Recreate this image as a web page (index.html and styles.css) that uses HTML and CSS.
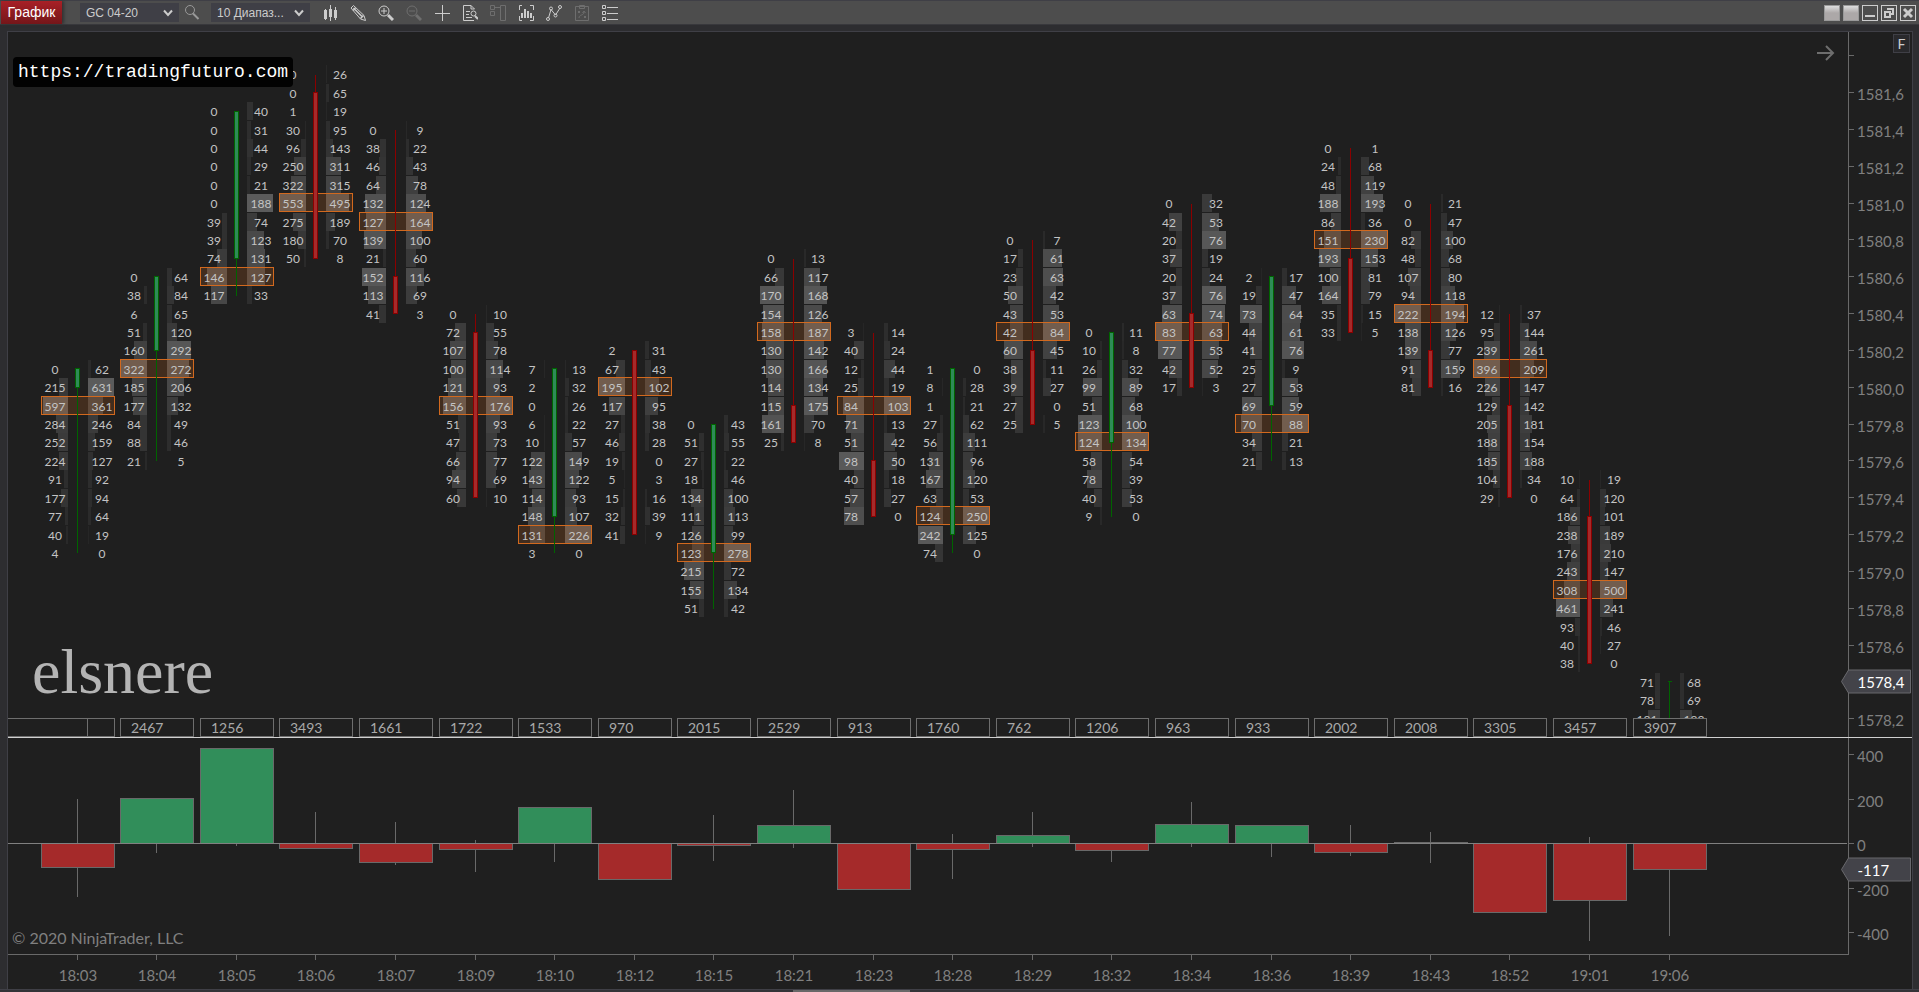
FILE: index.html
```html
<!DOCTYPE html>
<html lang="ru">
<head>
    <meta charset="UTF-8">
    <meta name="viewport" content="width=device-width, initial-scale=1.0">
    <title>График GC 04-20</title>
    <link rel="stylesheet" href="styles.css">
</head>
<body>
    <header class="toolbar">
        <h1 class="tab">График</h1>
        <div class="picker">
            <select aria-label="Instrument">
                <option>GC 04-20</option>
            </select>
            <svg class="chevron" width="10" height="8" viewBox="0 0 10 8"><path d="M1 1.5 5 6l4-4.5"/></svg>
        </div>
        <button class="tool search" aria-label="Search">
            <svg viewBox="0 0 16 16"><circle cx="6" cy="5" r="4.5"/><path d="M9 8.5 14.5 14" stroke-width="2"/></svg>
        </button>
        <div class="picker">
            <select aria-label="Interval">
                <option>10 Диапаз...</option>
            </select>
            <svg class="chevron" width="10" height="8" viewBox="0 0 10 8"><path d="M1 1.5 5 6l4-4.5"/></svg>
        </div>
        <div class="tools">
            <button class="tool" aria-label="Chart style">
                <svg viewBox="0 0 16 16"><path d="M3.5 4v11M8.5 0v16M13.5 2v13"/><path d="M3.5 5v9M8.5 4v8M13.5 5v8" stroke-width="3"/></svg>
            </button>
            <button class="tool" aria-label="Drawing tools">
                <svg viewBox="0 0 16 16"><path d="M1 3 3.5.5 14 10.500 15.500 15.500 10.500 14Z"/><path d="M3.5 3 12.500 12M3 5.500 5.500 3M10.500 13.500 13.500 10.500" stroke-width="1.500"/></svg>
            </button>
            <button class="tool" aria-label="Zoom in">
                <svg viewBox="0 0 16 16"><circle cx="6" cy="6" r="5"/><path d="M3 6h6M6 3v6"/><path d="M10 10l5 5" stroke-width="3"/></svg>
            </button>
            <button class="tool" aria-label="Zoom out" disabled>
                <svg viewBox="0 0 16 16"><circle cx="6" cy="6" r="5"/><path d="M3 6h6"/><path d="M10 10l5 5" stroke-width="3"/></svg>
            </button>
            <button class="tool" aria-label="Crosshair">
                <svg viewBox="0 0 16 16"><path d="M8.5 0v16M1 8.5h15"/></svg>
            </button>
            <button class="tool" aria-label="Data box">
                <svg viewBox="0 0 16 16"><path d="M12 15.5H1.500V.5H9L12.500 4M9 .5V4h3.500M4 6.500h4M4 9.500h3M4 12.500h6"/><circle cx="11.500" cy="8.500" r="2.500"/><path d="m13 11 3 3" stroke-width="2"/></svg>
            </button>
            <button class="tool" aria-label="Chart trader" disabled>
                <svg viewBox="0 0 16 16"><path d="M.5.500h4v4h-4ZM.5 6.500h4v4h-4ZM5 2.500h5M10.500.500h5v15h-5Z"/></svg>
            </button>
            <button class="tool" aria-label="Indicators">
                <svg viewBox="0 0 16 16"><path d="M4 .5H1.500V5M12 .5h3.500V5M4 15.500H1.500V11M12 15.500h3.500V11"/><path d="M4 8v5M7 4v9M10 6v7M13 8v5" stroke-width="2"/></svg>
            </button>
            <button class="tool" aria-label="Strategies">
                <svg viewBox="0 0 16 16"><path d="M2.500 13 5 4.500 9.500 10 14 3"/><circle cx="2" cy="14" r="1.500"/><circle cx="5" cy="3.500" r="1.500"/><circle cx="9.500" cy="10.500" r="1.500"/><circle cx="14" cy="2" r="1.500"/></svg>
            </button>
            <button class="tool" aria-label="Strategy performance" disabled>
                <svg viewBox="0 0 16 16"><path d="M1.500 1.500h13v14h-13ZM5.500.5h5v3h-5Z"/><path d="m4 6 2 2m0-2L4 8m6 3 2 2m0-2-2 2M5 13c0-4 5-2 5-6M8.500 8 10 6l1.500 2"/></svg>
            </button>
            <button class="tool" aria-label="Properties">
                <svg viewBox="0 0 16 16"><path d="M.5.500h3v3h-3ZM.5 6.500h3v3h-3ZM.5 12.500h3v3h-3ZM5 2.500h11M5 8.500h11M5 14.500h11"/></svg>
            </button>
        </div>
        <div class="window-buttons">
            <button class="link-button" aria-label="Instrument link"></button>
            <button class="link-button" aria-label="Interval link"></button>
            <button aria-label="Minimize"><svg viewBox="0 0 14 14"><path d="M2 10h10" stroke-width="2"/></svg></button>
            <button aria-label="Restore"><svg viewBox="0 0 14 14"><path d="M5 3h6v5H9M3 6h5v5H3Z" stroke-width="2"/></svg></button>
            <button aria-label="Close"><svg viewBox="0 0 14 14"><path d="m3 3 8 8M11 3l-8 8" stroke-width="3"/></svg></button>
        </div>
    </header>

    <main class="chart">
        <section class="pane price">
            <svg id="price"></svg>
            <a class="site" href="https://tradingfuturo.com">https://tradingfuturo.com</a>
            <p class="author">elsnere</p>
            <button class="scroll-end" aria-label="Go to last bar">
                <svg viewBox="0 0 20 16"><path d="M1 8h16M10 1l7 7-7 7"/></svg>
            </button>
            <button class="fixed">F</button>
        </section>
        <section class="pane delta">
            <svg id="delta"></svg>
            <p class="copyright">© 2020 NinjaTrader, LLC</p>
        </section>
        <section class="pane time">
            <svg id="time"></svg>
        </section>
    </main>
    <div class="scrollbar"><div class="thumb"></div></div>

    <script src="chart.js"></script>
</body>
</html>
```
FILE: styles.css
```css
* {
    box-sizing: border-box;
}
body {
    margin: 0;
    height: 100vh;
    display: flex;
    flex-direction: column;
    overflow: hidden;
    background-color: #2d2d30;
    color: #808080;
    font-family: "Liberation Sans", Arial, sans-serif;
    font-size: 12px;
}
button {
    padding: 0;
    border: none;
    background: none;
    color: inherit;
    font: inherit;
}
svg {
    display: block;
    fill: none;
    stroke: currentColor;
}

/* toolbar */
.toolbar {
    display: flex;
    align-items: center;
    height: 25px;
    padding: 0 3px 0 1px;
    border-top: 1px solid #3f3f46;
    border-bottom: 1px solid #38383c;
    background-color: #4d4d4d;
    color: #cccccc;
}
.tab {
    width: 61px;
    height: 23px;
    margin: 0 18px 0 0;
    background: linear-gradient(#a82026, #74161a);
    box-shadow: 2px 0 3px #333333;
    color: #ffffff;
    font-size: 14px;
    font-weight: normal;
    line-height: 23px;
    text-align: center;
}
.picker {
    position: relative;
    width: 99px;
    height: 19px;
}
.picker select {
    width: 100%;
    height: 100%;
    padding: 0 16px 0 6px;
    appearance: none;
    border: none;
    border-radius: 0;
    background-color: #3f3f46;
    color: #cccccc;
    font: inherit;
}
.chevron {
    position: absolute;
    top: 6px;
    right: 6px;
    stroke-width: 2;
    pointer-events: none;
}
.tool {
    width: 16px;
    height: 16px;
}
.tool:disabled {
    color: #6e6e6e;
}
.search {
    margin: 0 11px 0 5px;
    color: #999999;
}
.tools {
    display: flex;
    gap: 12px;
    margin-left: 12px;
}
.window-buttons {
    display: flex;
    gap: 3px;
    margin-left: auto;
}
.window-buttons button {
    width: 16px;
    height: 16px;
    border: 1px solid #cccccc;
}
.window-buttons .link-button {
    border-color: #999999;
    background: linear-gradient(#dddddd, #aca8a8 50%);
}

/* chart */
.chart {
    flex: 1;
    display: grid;
    grid-template-rows: minmax(0, 1fr) 217px 34px;
    margin: 6px 6px 0 7px;
    border: 1px solid #3f3f46;
    border-bottom: none;
    background-color: #1f1f1f;
    font-family: "Century Gothic", Lato, sans-serif;
    font-size: 15px;
}
.pane {
    position: relative;
    min-width: 0;
}
.pane > svg {
    width: 100%;
    height: 100%;
}
.price {
    border-bottom: 1px solid #d0d0d0;
}
.pane text {
    fill: #808080;
    stroke: none;
}
.pane rect,
.pane line {
    shape-rendering: crispEdges;
}
.axis {
    stroke: #696969;
}
.zero {
    stroke: #808080;
}
.pane .cell {
    fill: #c4c4c4;
    font-size: 12px;
    text-anchor: middle;
}
.volume {
    fill: #ffffff;
    stroke: none;
}
.poc {
    fill: rgba(210, 105, 30, 0.2);
    stroke: #d2691e;
}
.up {
    fill: #2e8b57;
    stroke: #006400;
}
.down {
    fill: #a52a2a;
    stroke: #8b0000;
}
.total {
    fill: #1f1f1f;
    stroke: #6e6e6e;
}
.pane .total-text {
    fill: #a9a9a9;
    font-size: 14px;
}
.delta .up,
.delta .down {
    stroke: #696969;
}
.delta .up {
    fill: #318e5a;
}
.time text {
    text-anchor: middle;
}
.marker {
    fill: #434349;
    stroke: #69696d;
}
.pane .marker-text {
    fill: #ffffff;
}

/* things that lie over the chart */
.site {
    position: absolute;
    top: 25px;
    left: 5px;
    padding: 0 5px;
    border-radius: 4px;
    background-color: #020202;
    color: #ffffff;
    font: 18px/30px "Liberation Mono", "Courier New", monospace;
    text-decoration: none;
}
.author {
    position: absolute;
    bottom: 33px;
    left: 24px;
    margin: 0;
    color: #b4b4b4;
    font: 64px/64px "Liberation Serif", "Times New Roman", serif;
}
.scroll-end {
    position: absolute;
    top: 13px;
    right: 76px;
    width: 20px;
    height: 16px;
    color: #6e6e6e;
}
.scroll-end svg {
    stroke-width: 2;
}
.fixed {
    position: absolute;
    top: 2px;
    right: 2px;
    width: 17px;
    height: 19px;
    border: 1px solid #3f3f46;
    background-color: #29292c;
    color: #cccccc;
    font-size: 14px;
    line-height: 17px;
}
.copyright {
    position: absolute;
    bottom: 8px;
    left: 4px;
    margin: 0;
    font-size: 16px;
    line-height: 18px;
}
.scrollbar {
    height: 3px;
    border-top: 1px solid #3f3f46;
    background-color: #333337;
}
.thumb {
    width: 117px;
    height: 2px;
    margin-left: 793px;
    background-color: #686868;
}
```
FILE: chart.js
```js
// row = ticks below 1581,6; body = [first, last] row of the candle body; cells = bid, ask
const bars = [
    { time: '18:03', row: 15, body: [15, 16], up: true, poc: 2, wick: [203, -237], cells: [[0, 62], [215, 631], [597, 361], [284, 246], [252, 159], [224, 127], [91, 92], [177, 94], [77, 64], [40, 19], [4, 0]] },
    { time: '18:04', row: 10, body: [10, 14], up: true, poc: 5, wick: [0, -39], cells: [[0, 64], [38, 84], [6, 65], [51, 120], [160, 292], [322, 272], [185, 206], [177, 132], [84, 49], [88, 46], [21, 5]] },
    { time: '18:05', row: 1, body: [1, 9], up: true, poc: 9, wick: [0, -8], cells: [[0, 40], [0, 31], [0, 44], [0, 29], [0, 21], [0, 188], [39, 74], [39, 123], [74, 131], [146, 127], [117, 33]] },
    { time: '18:06', row: -1, body: [0, 9], up: false, poc: 7, wick: [145, 0], cells: [[0, 26], [0, 65], [1, 19], [30, 95], [96, 143], [250, 311], [322, 315], [553, 495], [275, 189], [180, 70], [50, 8]] },
    { time: '18:07', row: 2, body: [10, 12], up: false, poc: 5, wick: [100, -93], cells: [[0, 9], [38, 22], [46, 43], [64, 78], [132, 124], [127, 164], [139, 100], [21, 60], [152, 116], [113, 69], [41, 3]] },
    { time: '18:09', row: 12, body: [13, 22], up: false, poc: 5, wick: [19, -124], cells: [[0, 10], [72, 55], [107, 78], [100, 114], [121, 93], [156, 176], [51, 93], [47, 73], [66, 77], [94, 69], [60, 10]] },
    { time: '18:10', row: 15, body: [15, 23], up: true, poc: 9, wick: [0, -80], cells: [[7, 13], [2, 32], [0, 26], [6, 22], [10, 57], [122, 149], [143, 122], [114, 93], [148, 107], [131, 226], [3, 0]] },
    { time: '18:12', row: 14, body: [14, 24], up: false, poc: 2, wick: [0, 0], cells: [[2, 31], [67, 43], [195, 102], [117, 95], [27, 38], [46, 28], [19, 0], [5, 3], [15, 16], [32, 39], [41, 9]] },
    { time: '18:15', row: 18, body: [18, 25], up: true, poc: 7, wick: [131, -75], cells: [[0, 43], [51, 55], [27, 22], [18, 46], [134, 100], [111, 113], [126, 99], [123, 278], [215, 72], [155, 134], [51, 42]] },
    { time: '18:21', row: 9, body: [17, 19], up: false, poc: 4, wick: [244, -17], cells: [[0, 13], [66, 117], [170, 168], [154, 126], [158, 187], [130, 142], [130, 166], [114, 134], [115, 175], [161, 70], [25, 8]] },
    { time: '18:23', row: 13, body: [20, 23], up: false, poc: 4, wick: [0, 0], cells: [[3, 14], [40, 24], [12, 44], [25, 19], [84, 103], [71, 13], [51, 42], [98, 50], [40, 18], [57, 27], [78, 0]] },
    { time: '18:28', row: 15, body: [15, 24], up: true, poc: 8, wick: [46, -156], cells: [[1, 0], [8, 28], [1, 21], [27, 62], [56, 111], [131, 96], [167, 120], [63, 53], [124, 250], [242, 125], [74, 0]] },
    { time: '18:29', row: 8, body: [14, 18], up: false, poc: 5, wick: [145, -12], cells: [[0, 7], [17, 61], [23, 63], [50, 42], [43, 53], [42, 84], [60, 45], [38, 11], [39, 27], [27, 0], [25, 5]] },
    { time: '18:32', row: 13, body: [13, 19], up: true, poc: 6, wick: [0, -80], cells: [[0, 11], [10, 8], [26, 32], [99, 89], [51, 68], [123, 100], [124, 134], [58, 54], [78, 39], [40, 53], [9, 0]] },
    { time: '18:34', row: 6, body: [12, 16], up: false, poc: 7, wick: [190, -12], cells: [[0, 32], [42, 53], [20, 76], [37, 19], [20, 24], [37, 76], [63, 74], [83, 63], [77, 53], [42, 52], [17, 3]] },
    { time: '18:36', row: 10, body: [10, 17], up: true, poc: 8, wick: [0, -57], cells: [[2, 17], [19, 47], [73, 64], [44, 61], [41, 76], [25, 9], [27, 53], [69, 59], [70, 88], [34, 21], [21, 13]] },
    { time: '18:39', row: 3, body: [9, 13], up: false, poc: 5, wick: [87, -53], cells: [[0, 1], [24, 68], [48, 119], [188, 193], [86, 36], [151, 230], [193, 153], [100, 81], [164, 79], [35, 15], [33, 5]] },
    { time: '18:43', row: 6, body: [14, 16], up: false, poc: 6, wick: [55, -84], cells: [[0, 21], [0, 47], [82, 100], [48, 68], [107, 80], [94, 118], [222, 194], [138, 126], [139, 77], [91, 159], [81, 16]] },
    { time: '18:52', row: 12, body: [17, 22], up: false, poc: 3, wick: [0, 0], cells: [[12, 37], [95, 144], [239, 261], [396, 209], [226, 147], [129, 142], [205, 181], [188, 154], [185, 188], [104, 34], [29, 0]] },
    { time: '19:01', row: 21, body: [23, 31], up: false, poc: 6, wick: [33, -434], cells: [[10, 19], [64, 120], [186, 101], [238, 189], [176, 210], [243, 147], [308, 500], [461, 241], [93, 46], [40, 27], [38, 0]] },
    { time: '19:06', row: 32, body: [32, 32], up: true, poc: -1, low: 36, max: 400, total: 3907, delta: -117, wick: [0, -412], cells: [[71, 68], [78, 69], [181, 183]] }
];

const ROW = 18.41;
const STEP = 79.6;
const AXIS = 64;
const DELTA_SCALE = 0.2225;
const ZERO = 105;

const price = document.getElementById('price');
const delta = document.getElementById('delta');
const time = document.getElementById('time');

function add(svg, name, attrs, text) {
    const node = document.createElementNS('http://www.w3.org/2000/svg', name);
    for (const key in attrs) node.setAttribute(key, attrs[key]);
    if (text !== undefined) node.textContent = text;
    svg.appendChild(node);
}

function line(svg, x1, y1, x2, y2, cls) {
    add(svg, 'line', { x1, y1, x2, y2, class: cls });
}

function rect(svg, x, y, width, height, cls) {
    add(svg, 'rect', { x, y, width, height, class: cls });
}

function rowTop(row) {
    return Math.round(51.7 + ROW * row);
}

function rowMid(row) {
    return Math.floor(60.7 + ROW * row) + 0.5;
}

function deltaY(value) {
    return Math.round(ZERO - value * DELTA_SCALE) + 0.5;
}

function marker(svg, x, y, text) {
    add(svg, 'path', { d: `M${x - 7} ${y}l7 -11.5h${AXIS - 2}v23h-${AXIS - 2}z`, class: 'marker' });
    add(svg, 'text', { x: x + 9, y: y + 6, class: 'marker-text' }, text);
}

function drawBar(bar, x) {
    const max = bar.max || Math.max(...bar.cells.flat());
    bar.cells.forEach(([bid, ask], i) => {
        const y = rowTop(bar.row + i);
        const w1 = Math.round(bid / max * 26);
        const w2 = Math.round(ask / max * 26);
        add(price, 'rect', { x: x - 9 - w1, y, width: w1, height: 18, class: 'volume', 'fill-opacity': 0.03 + bid / max * 0.24 });
        add(price, 'rect', { x: x + 11, y, width: w2, height: 18, class: 'volume', 'fill-opacity': 0.03 + ask / max * 0.24 });
    });
    if (bar.poc >= 0) {
        rect(price, x - 35.5, rowTop(bar.row + bar.poc) - 0.5, 73, 18, 'poc');
    }
    bar.cells.forEach(([bid, ask], i) => {
        const y = rowTop(bar.row + i) + 14;
        add(price, 'text', { x: x - 22, y, class: 'cell' }, bid);
        add(price, 'text', { x: x + 25, y, class: 'cell' }, ask);
    });

    const cls = bar.up ? 'up' : 'down';
    const low = bar.low || bar.row + bar.cells.length - 1;
    const top = rowMid(bar.body[0]);
    line(price, x + 0.5, rowMid(bar.row), x + 0.5, rowMid(low), cls);
    rect(price, x - 1.5, top, 4, rowMid(bar.body[1]) - top, cls);
    if (bar.body[0] === bar.body[1]) {
        line(price, x - 1, top, x + 3, top, cls);
    }
}

function draw() {
    [price, delta, time].forEach(svg => svg.replaceChildren());
    const width = price.clientWidth - AXIS;
    const bottom = price.clientHeight;

    line(price, width + 0.5, 0, width + 0.5, bottom, 'axis');
    for (let row = -2; rowMid(row) < bottom; row += 2) {
        const y = rowMid(row);
        line(price, width, y, width + 6, y, 'axis');
        if (row >= 0) {
            const label = (1581.6 - row / 10).toFixed(1).replace('.', ',');
            add(price, 'text', { x: width + 9, y: y + 7 }, label);
        }
    }

    line(delta, width + 0.5, 0, width + 0.5, 217, 'axis');
    line(delta, 0, 216.5, width + 1, 216.5, 'axis');
    for (let value = 400; value >= -400; value -= 200) {
        line(delta, width, deltaY(value), width + 6, deltaY(value), 'axis');
        add(delta, 'text', { x: width + 9, y: deltaY(value) + 7 }, value);
    }

    bars.forEach((bar, i) => {
        const x = Math.floor(width - 178.99 - STEP * (bars.length - 1 - i));
        drawBar(bar, x);

        // bid + ask volume of the bar
        const bid = bar.cells.reduce((sum, cell) => sum + cell[0], 0);
        const ask = bar.cells.reduce((sum, cell) => sum + cell[1], 0);
        if (i === 0) {
            rect(price, -1, bottom - 18.5, x + 38.5, 18, 'total');
            line(price, x + 10.5, bottom - 18, x + 10.5, bottom, 'total');
        } else {
            rect(price, x - 35.5, bottom - 18.5, 73, 18, 'total');
            add(price, 'text', { x: x - 25, y: bottom - 4, class: 'total-text' }, bar.total || bid + ask);
        }

        const diff = bar.delta || ask - bid;
        const y = deltaY(diff);
        const zero = deltaY(0);
        line(delta, x + 0.5, deltaY(bar.wick[0]), x + 0.5, deltaY(bar.wick[1]), 'axis');
        rect(delta, x - 35.5, Math.min(y, zero), 73, Math.abs(y - zero), diff > 0 ? 'up' : 'down');

        line(time, x + 0.5, 0, x + 0.5, 5, 'axis');
        add(time, 'text', { x: x + 1, y: 26 }, bar.time);
    });

    line(delta, 0, deltaY(0), width - 1, deltaY(0), 'zero');
    marker(price, width + 0.5, rowMid(32), '1578,4');
    marker(delta, width + 0.5, deltaY(-117), '-117');
}

draw();
window.addEventListener('resize', draw);
```
